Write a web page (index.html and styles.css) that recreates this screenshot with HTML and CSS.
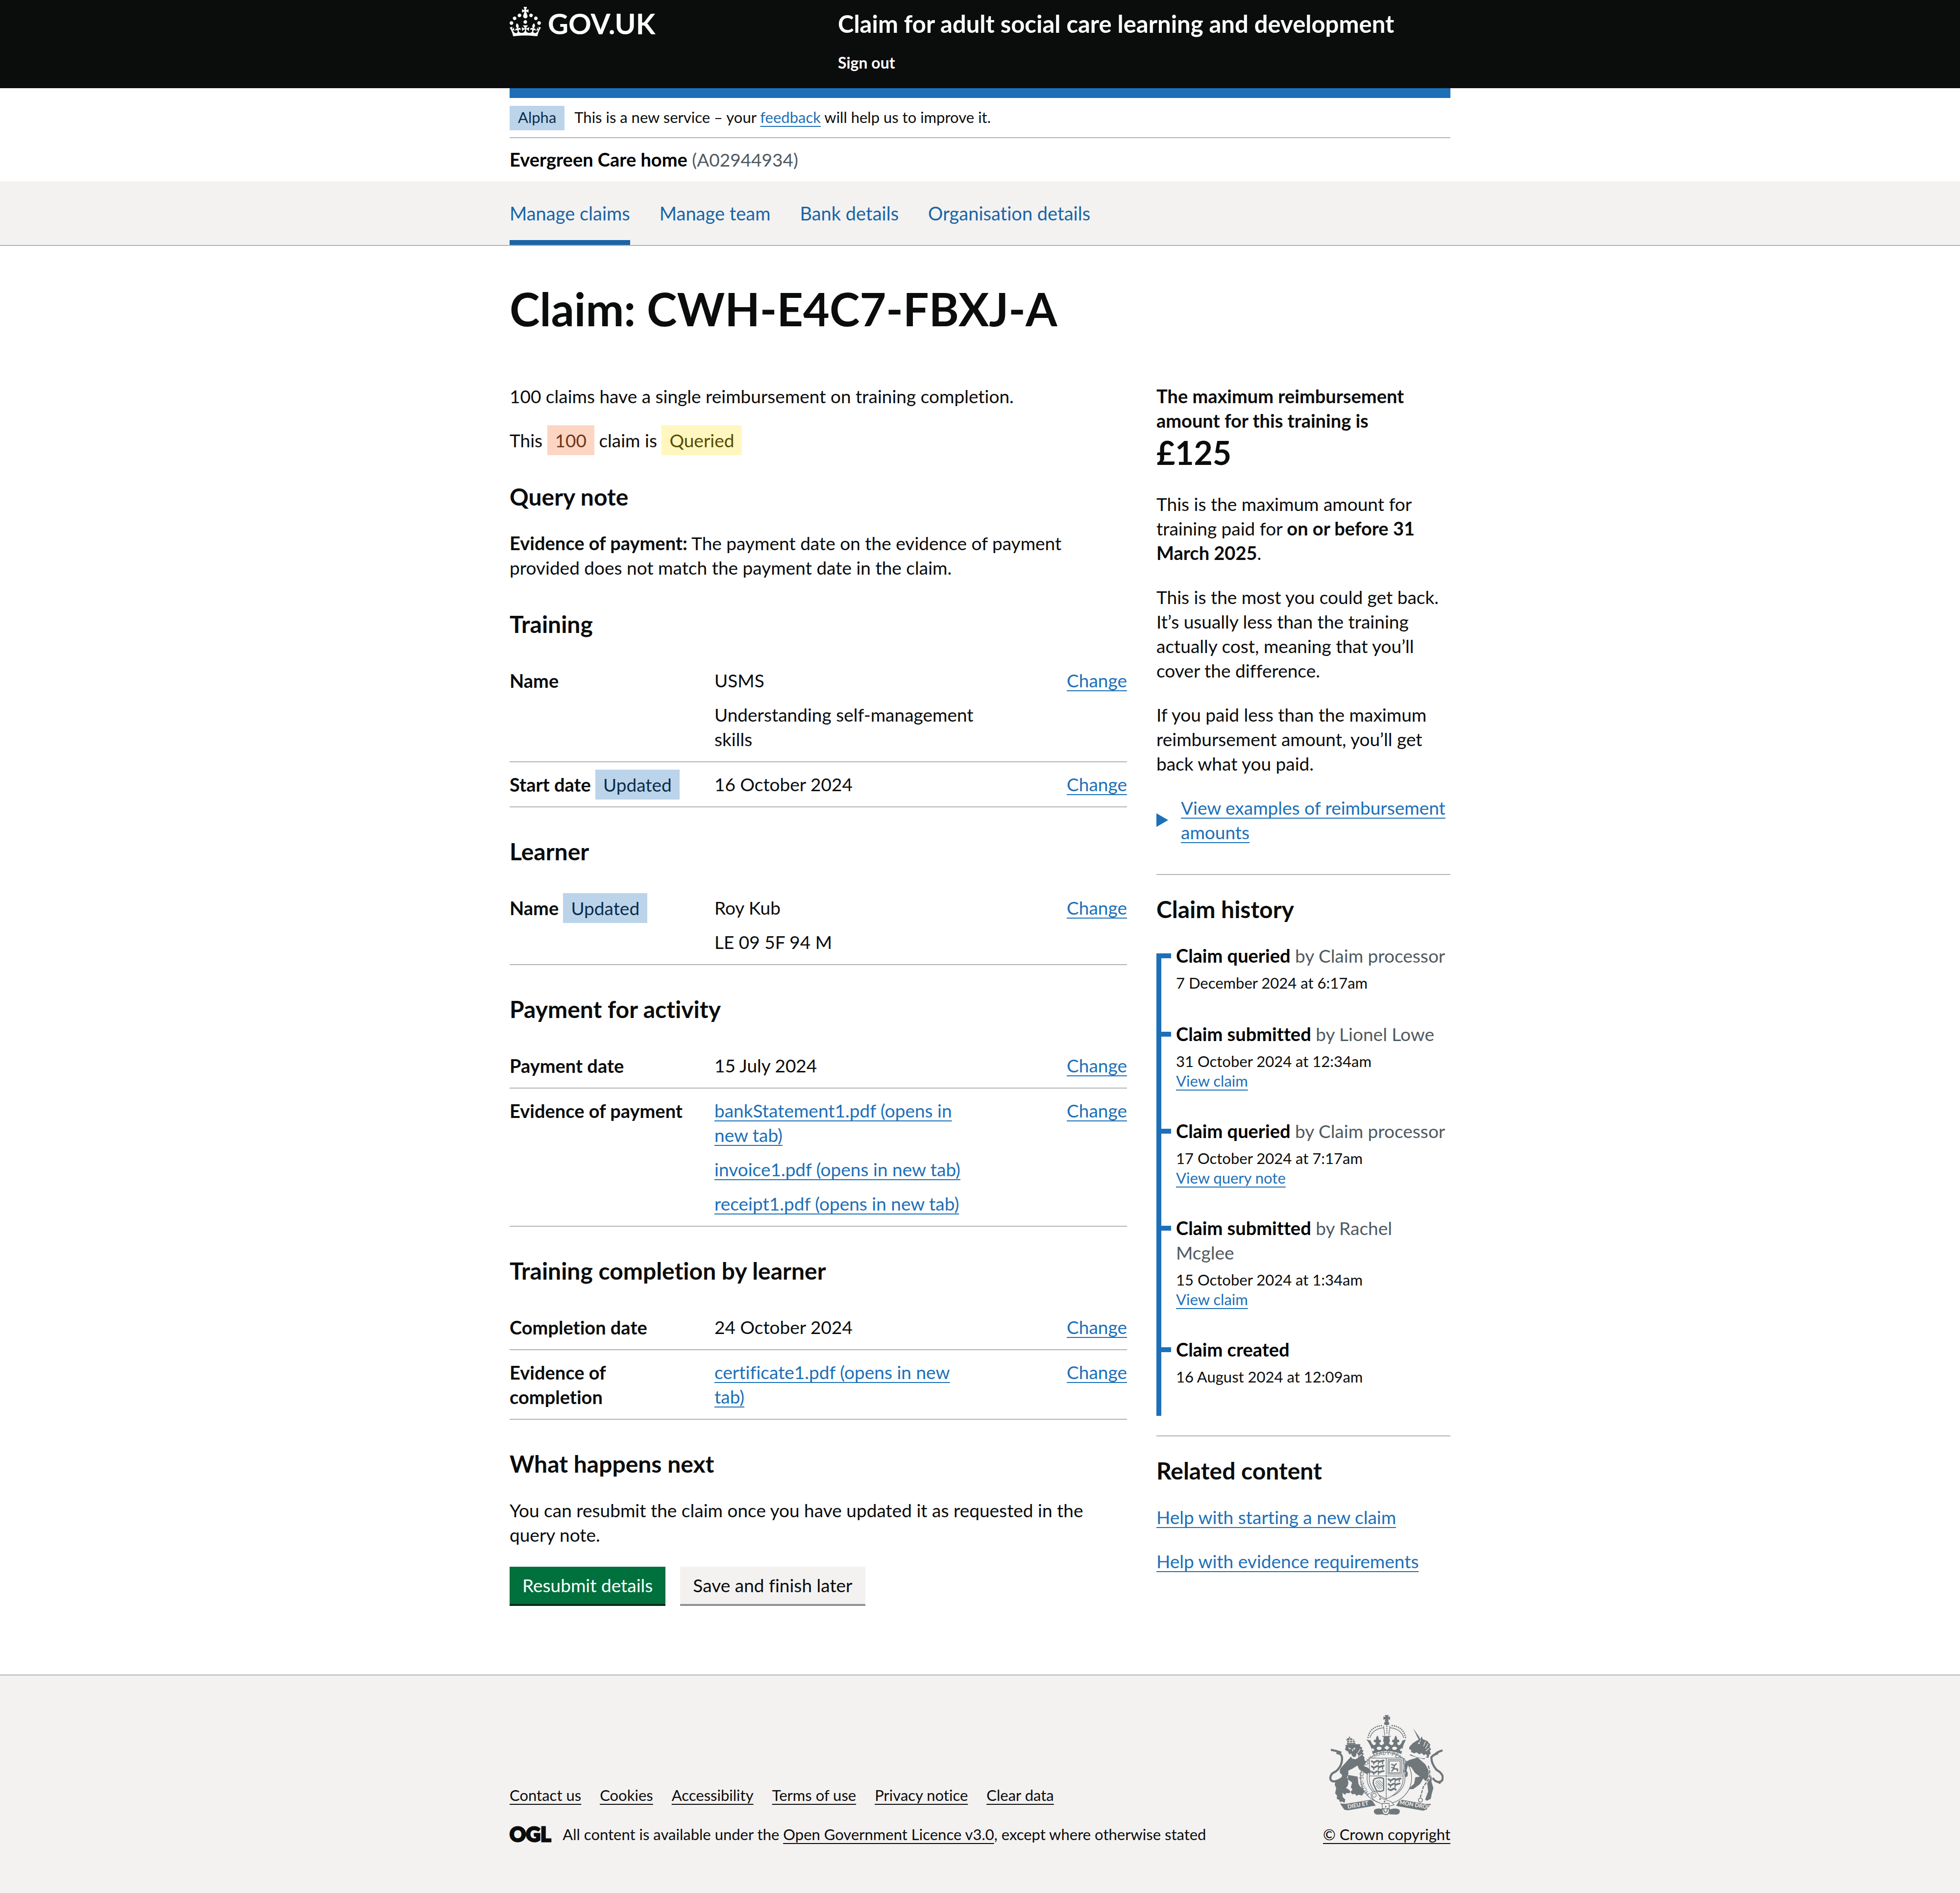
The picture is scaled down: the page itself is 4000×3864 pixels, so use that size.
FILE: index.html
```
<!DOCTYPE html>
<html lang="en">
<head>
<meta charset="utf-8">
<meta name="viewport" content="width=device-width, initial-scale=1">
<title>Claim: CWH-E4C7-FBXJ-A – Claim for adult social care learning and development</title>
<link rel="stylesheet" href="styles.css">
</head>
<body>

<header class="header">
  <div class="container header-grid">
    <a class="header-logo" href="#" aria-label="GOV.UK">
      <svg class="crown" viewBox="0 0 32 30" aria-hidden="true"><path fill="currentColor" fill-rule="evenodd" d="M22.6 10.4c-1 .4-2-.1-2.4-1-.4-.9.1-2 1-2.4.9-.4 2 .1 2.4 1s-.1 2-1 2.4m-5.9 6.7c-.9.4-2-.1-2.4-1-.4-.9.1-2 1-2.4.9-.4 2 .1 2.4 1s-.1 2-1 2.4m10.8-3.7c-1 .4-2-.1-2.4-1-.4-.9.1-2 1-2.4.9-.4 2 .1 2.4 1s0 2-1 2.4m3.3 4.8c-1 .4-2-.1-2.4-1-.4-.9.1-2 1-2.4.9-.4 2 .1 2.4 1s-.1 2-1 2.4M17 4.7l2.3 1.2V2.5l-2.3.7-.2-.2.9-3h-3.4l.9 3-.2.2c-.1.1-2.3-.7-2.3-.7v3.4L15 4.7c.1.1.1.2.2.2l-1.3 4c-.1.2-.1.4-.1.6 0 1.1.8 2 1.9 2.2h.7c1-.2 1.9-1.1 1.9-2.1 0-.2 0-.4-.1-.6l-1.3-4c-.1-.2 0-.2.1-.3m-7.6 5.7c.9.4 2-.1 2.4-1 .4-.9-.1-2-1-2.4-.9-.4-2 .1-2.4 1s0 2 1 2.4m-5 3c.9.4 2-.1 2.4-1 .4-.9-.1-2-1-2.4-.9-.4-2 .1-2.4 1s.1 2 1 2.4m-3.2 4.8c.9.4 2-.1 2.4-1 .4-.9-.1-2-1-2.4-.9-.4-2 .1-2.4 1s0 2 1 2.4m14.8 11c4.4 0 8.6.3 12.3.8 1.1-4.5 2.4-7 3.7-8.8l-2.5-.9c.2 1.3.3 1.9 0 2.7-.4-.4-.8-1.1-1.1-2.3l-1.2 4c.7-.5 1.3-.8 2-.9-1.1 2.5-2.6 3.1-3.5 3-1.1-.2-1.7-1.2-1.5-2.1.3-1.2 1.5-1.5 2.1-.1 1.1-2.3-.8-3-2-2.3 1.9-1.9 2.1-3.5.6-5.6-2.1 1.6-2.1 3.2-1.2 5.5-1.2-1.4-3.2-.6-2.5 1.6.9-1.4 2.1-.5 1.9.8-.2 1.1-1.7 2.1-3.5 1.9-2.7-.2-2.9-2.1-2.9-3.6.7-.1 1.9.5 2.9 1.9l.4-4.3c-1.1 1.1-2.1 1.4-3.2 1.4.4-1.2 2.1-3 2.1-3h-5.4s1.7 1.9 2.1 3c-1.1 0-2.1-.2-3.2-1.4l.4 4.3c1-1.4 2.2-2 2.9-1.9-.1 1.5-.2 3.4-2.9 3.6-1.9.2-3.4-.8-3.5-1.9-.2-1.3 1-2.2 1.9-.8.7-2.3-1.2-3-2.5-1.6.9-2.2.9-3.9-1.2-5.5-1.5 2-1.3 3.7.6 5.6-1.2-.7-3.1 0-2 2.3.6-1.4 1.8-1.1 2.1.1.2.9-.3 1.9-1.5 2.1-.9.2-2.4-.5-3.5-3 .6 0 1.2.3 2 .9l-1.2-4c-.3 1.1-.7 1.9-1.1 2.3-.3-.8-.2-1.4 0-2.7l-2.9.9C1.3 23 2.6 25.5 3.7 30c3.7-.5 7.9-.8 12.3-.8"/></svg>
      <span>GOV.UK</span>
    </a>
    <div class="header-content">
      <a class="service-name" href="#">Claim for adult social care learning and development</a>
      <nav aria-label="Account"><a class="sign-out" href="#">Sign out</a></nav>
    </div>
  </div>
</header>

<div class="container">
  <div class="blue-bar"></div>
  <div class="phase-banner">
    <strong class="tag tag-phase">Alpha</strong>
    <span>This is a new service – your <a class="link" href="#">feedback</a> will help us to improve it.</span>
  </div>
  <p class="organisation"><strong>Evergreen Care home</strong> <span class="muted">(A02944934)</span></p>
</div>

<nav class="primary-nav" aria-label="Primary">
  <ul class="container nav-list">
    <li><a class="nav-link nav-link-current" href="#" aria-current="page">Manage claims</a></li>
    <li><a class="nav-link" href="#">Manage team</a></li>
    <li><a class="nav-link" href="#">Bank details</a></li>
    <li><a class="nav-link" href="#">Organisation details</a></li>
  </ul>
</nav>

<main class="container main">
  <h1 class="page-title">Claim: CWH-E4C7-FBXJ-A</h1>
  <div class="columns">
    <div class="content">
      <p>100 claims have a single reimbursement on training completion.</p>
      <p>This <strong class="tag tag-orange">100</strong> claim is <strong class="tag tag-yellow">Queried</strong></p>

      <h2 class="heading">Query note</h2>
      <p><strong>Evidence of payment:</strong> The payment date on the evidence of payment provided does not match the payment date in the claim.</p>

      <h2 class="heading">Training</h2>
      <dl class="summary">
        <div class="row">
          <dt>Name</dt>
          <dd class="value"><p>USMS</p><p>Understanding self-management skills</p></dd>
          <dd class="action"><a class="link" href="#">Change</a></dd>
        </div>
        <div class="row">
          <dt>Start date <strong class="tag">Updated</strong></dt>
          <dd class="value"><p>16 October 2024</p></dd>
          <dd class="action"><a class="link" href="#">Change</a></dd>
        </div>
      </dl>

      <h2 class="heading">Learner</h2>
      <dl class="summary">
        <div class="row">
          <dt>Name <strong class="tag">Updated</strong></dt>
          <dd class="value"><p>Roy Kub</p><p>LE 09 5F 94 M</p></dd>
          <dd class="action"><a class="link" href="#">Change</a></dd>
        </div>
      </dl>

      <h2 class="heading">Payment for activity</h2>
      <dl class="summary">
        <div class="row">
          <dt>Payment date</dt>
          <dd class="value"><p>15 July 2024</p></dd>
          <dd class="action"><a class="link" href="#">Change</a></dd>
        </div>
        <div class="row">
          <dt>Evidence of payment</dt>
          <dd class="value">
            <p><a class="link" href="#">bankStatement1.pdf (opens in new tab)</a></p>
            <p><a class="link" href="#">invoice1.pdf (opens in new tab)</a></p>
            <p><a class="link" href="#">receipt1.pdf (opens in new tab)</a></p>
          </dd>
          <dd class="action"><a class="link" href="#">Change</a></dd>
        </div>
      </dl>

      <h2 class="heading">Training completion by learner</h2>
      <dl class="summary">
        <div class="row">
          <dt>Completion date</dt>
          <dd class="value"><p>24 October 2024</p></dd>
          <dd class="action"><a class="link" href="#">Change</a></dd>
        </div>
        <div class="row">
          <dt>Evidence of completion</dt>
          <dd class="value"><p><a class="link" href="#">certificate1.pdf (opens in new tab)</a></p></dd>
          <dd class="action"><a class="link" href="#">Change</a></dd>
        </div>
      </dl>

      <h2 class="heading">What happens next</h2>
      <p>You can resubmit the claim once you have updated it as requested in the query note.</p>
      <div class="button-group">
        <button class="button" type="button">Resubmit details</button>
        <button class="button button-secondary" type="button">Save and finish later</button>
      </div>
    </div>

    <aside class="sidebar">
      <p class="amount"><strong>The maximum reimbursement amount for this training is</strong> <strong class="amount-figure">£125</strong></p>
      <p>This is the maximum amount for training paid for <strong>on or before 31 March 2025</strong>.</p>
      <p>This is the most you could get back. It’s usually less than the training actually cost, meaning that you’ll cover the difference.</p>
      <p>If you paid less than the maximum reimbursement amount, you’ll get back what you paid.</p>
      <details class="details">
        <summary><span class="link">View examples of reimbursement amounts</span></summary>
      </details>

      <section class="panel">
        <h2 class="heading">Claim history</h2>
        <ol class="timeline">
          <li>
            <h3><strong>Claim queried</strong> <span class="muted">by Claim processor</span></h3>
            <time>7 December 2024 at 6:17am</time>
          </li>
          <li>
            <h3><strong>Claim submitted</strong> <span class="muted">by Lionel Lowe</span></h3>
            <time>31 October 2024 at 12:34am</time>
            <div class="timeline-link"><a class="link" href="#">View claim</a></div>
          </li>
          <li>
            <h3><strong>Claim queried</strong> <span class="muted">by Claim processor</span></h3>
            <time>17 October 2024 at 7:17am</time>
            <div class="timeline-link"><a class="link" href="#">View query note</a></div>
          </li>
          <li>
            <h3><strong>Claim submitted</strong> <span class="muted">by Rachel Mcglee</span></h3>
            <time>15 October 2024 at 1:34am</time>
            <div class="timeline-link"><a class="link" href="#">View claim</a></div>
          </li>
          <li>
            <h3><strong>Claim created</strong></h3>
            <time>16 August 2024 at 12:09am</time>
          </li>
        </ol>
      </section>

      <section class="panel">
        <h2 class="heading">Related content</h2>
        <p><a class="link" href="#">Help with starting a new claim</a></p>
        <p><a class="link" href="#">Help with evidence requirements</a></p>
      </section>
    </aside>
  </div>
</main>

<footer class="footer">
  <div class="container footer-inner">
    <div class="footer-meta">
      <ul class="footer-links">
        <li><a class="link" href="#">Contact us</a></li>
        <li><a class="link" href="#">Cookies</a></li>
        <li><a class="link" href="#">Accessibility</a></li>
        <li><a class="link" href="#">Terms of use</a></li>
        <li><a class="link" href="#">Privacy notice</a></li>
        <li><a class="link" href="#">Clear data</a></li>
      </ul>
      <div class="licence">
        <span class="ogl">OGL</span>
        <span>All content is available under the <a class="link" href="#">Open Government Licence v3.0</a>, except where otherwise stated</span>
      </div>
    </div>
    <div class="copyright">
      <svg class="crest" viewBox="100 58 700 616" aria-hidden="true">
        <defs>
          <path id="garter" d="M352 540A138 138 0 1 1 545 540"/>
        </defs>
        <g fill="currentColor">
          <!-- crown -->
          <path d="M441 60h24l-4 13 12-5v22l-12-5 4 14h-24l4-14-12 5V68l12 5z"/>
          <path d="M438 118q-4-18 15-20 19 2 15 20l-15 6z"/>
          <path d="M333 210l22 6q8 26 22 28 12-2 8-18l-12-2 4-14 10 2q-2-14 9-27 11 13 9 27l10-2 4 14-10 4q0 16 12 16 14-2 16-16l-6-8 4-24-12-8h58l-12 8 4 24-6 8q2 14 16 16 12 0 12-16l-10-4 4-14 10 2q-2-14 9-27 11 13 9 27l10-2 4 14-12 2q-4 16 8 18 14-2 22-28l22-6q-22 38-28 88-92-36-176 0-6-50-38-88z"/>
        </g>
        <g fill="none" stroke="currentColor">
          <path stroke-width="9" stroke-linecap="round" stroke-dasharray="0 13" d="M339 196q14-66 86-72M568 196q-14-66-84-72"/>
          <path stroke-width="4" d="M350 200q18-56 84-62M558 200q-18-56-84-62M434 126l7 58M473 126l-7 58"/>
          <path stroke-width="8" stroke-linecap="round" stroke-dasharray="0 13" d="M454 130v52"/>
        </g>
        <g class="crest-paper">
          <ellipse cx="407" cy="263" rx="15" ry="10"/><ellipse cx="501" cy="263" rx="15" ry="10"/>
          <path d="M454 246l16 14-16 13-16-13zM366 262l12 10-8 10-12-10zM544 262l-12 10 8 10 12-10z"/>
        </g>
        <!-- lion -->
        <g fill="currentColor">
          <path d="M209 238q6-10 2-18-10-10 4-18l8-2v-8h6v8l10 2q16 6 20 18 2 8 4 18z"/>
          <path d="M202 246l14-8h54l22 0-2 14 14 6-4 12 12 8-8 10 10 10-8 8 10 10 2 20 20 20 12 30 16 16-6 16-14-4-10 12-12-8-14-16-24-8-12-26-30 20-26 12q4 24-8 40 20 40-6 66l20 10 8 14-8 8-18-2-6 10-10-4-18-18-20-2-8-18-8-16 4-30 22-6q20-6 18-28-22-10-8-40l70-78-22-8-8-16-14-12 6-16-8-14z"/>
          <path d="M218 426l58 10 4 40q6 24 34 36l2 20-14 20-20-6-14 8-8-12-18 2-10-14 12-16-10-12 8-30-28-20z"/>
          <path d="M146 500l36 20 2 40 16 16-4 20-16-8-12 4-6-14-14-6 2-20-12-14z"/>
        </g>
        <path fill="none" stroke="currentColor" stroke-width="13" d="M188 440q-30 24-58 26-26-4-20-30 4-20 30-30 44-34 40-90-6-24-34-24M176 290q-30-12-64-18M150 460q10 18-2 18"/>
        <g class="crest-paper">
          <path d="M216 258l20 6-8 6zM262 258l-16 8 12 6zM240 270l10 0-4 14zM228 300l8-6 4 14 12 10 14-6 2-20 12 12-2 18-16 8-20-4z"/>
          <path d="M228 416q10-8 26-4l20 12-26-4z"/>
        </g>
        <g fill="none" stroke="#f3f2f1" stroke-width="4"><path d="M210 216h52M216 228h46M228 202v30M244 204v28M214 280l10 24M292 268l-16 24M302 300l-20 14"/></g>
        <!-- unicorn -->
        <g fill="currentColor">
          <path d="M614 140l36 52 8 18-8 4z"/>
          <path d="M592 254l20-22 28-18 18-6 8-18 8 18 26 10 20 24-6 10 10 18-8 8 6 18-10 8-4 18-14-2-12 10-50-12-38-12 8-14 0-20-12-2z"/>
          <path d="M562 352l30-18 50-14 46 40 24 44q22 38 14 62l12 40-10 36-6 30-24 12-10-8 18-50-6-52-24-26-20 34-40 30-34 2 38-34 8-40 28-4-30-22-24-36-30-10-8 38 6 16-10 8q-18-30-10-52z"/>
        </g>
        <path fill="none" stroke="currentColor" stroke-width="13" d="M734 444q14 26 42 26 24-10 18-38-10-24-36-36-34-40-32-78 14-18 40-24M744 304q20-20 50-28M772 464q6 6 2 16"/>
        <g class="crest-paper"><path d="M604 286l16 8 16-6 16 12 14-8 14 14 12-8 8 12-10 14-24 0-40-10-32-16z"/><circle cx="650" cy="232" r="5"/></g>
        <g fill="none" stroke="#f3f2f1" stroke-width="4"><path d="M690 222l-12 28M706 236l-16 28M712 262l-20 18M660 214l-6 10"/></g>
        <g fill="none" stroke="#f3f2f1" stroke-width="14" stroke-dasharray="20 4"><path d="M706 370q18 40 4 80l-34 50-18 64"/></g>
        <g fill="none" stroke="currentColor" stroke-width="7" stroke-dasharray="20 7"><path d="M706 370q18 40 4 80l-34 50-18 64"/></g>
        <circle cx="659" cy="580" r="12" fill="none" stroke="currentColor" stroke-width="5"/>
        <!-- garter and shield -->
        <circle class="crest-paper" cx="449" cy="444" r="156" stroke="currentColor" stroke-width="4"/>
        <circle cx="449" cy="444" r="116" fill="none" stroke="currentColor" stroke-width="4"/>
        <text class="crest-garter"><textPath href="#garter">HONI·SOIT·QUI·MAL·Y·PENSE</textPath></text>
        <path class="crest-paper" stroke="currentColor" stroke-width="4" d="M347 323h206v130q-4 76-103 120-99-44-103-120z"/>
        <path fill="none" stroke="currentColor" stroke-width="4" d="M450 323v250M347 432h206M461 333h82v88h-82zM469 341h66v72h-66z"/>
        <g fill="none" stroke="currentColor" stroke-width="11" stroke-linecap="round" stroke-linejoin="round">
          <path d="M362 342q12 12 24 2t22 2q14-6 26-8M362 374q12 12 24 2t22 2q14-6 26-8M362 406q12 12 24 2t22 2q14-6 26-8"/>
          <path d="M464 452q12 12 24 2t20 2q14-6 30-8M464 482q12 12 24 2t20 2q14-6 24-8M464 512q12 12 24 2t20 2"/>
          <path stroke-width="7" d="M374 352v8M402 352v8M428 346v12M374 384v8M402 384v8M428 378v12M374 416v6M402 416v6M476 462v8M504 462v8M530 454v10M476 492v8M504 492v8"/>
          <path stroke-width="8" d="M484 362l16 6 12-10M500 368l-4 20 24 2M496 388l-12 14M516 390l4 12M484 380l10 4"/>
          <path stroke-width="8" d="M374 456q-8 20 4 40l14 28q26 6 42-4V448q-20-12-56 2"/>
        </g>
        <path fill="none" stroke="currentColor" stroke-width="3" d="M386 462l40 40M384 474l36 36M394 458l34 34M386 490l24 24M406 456l22 22"/>
        <!-- supporters' paws over the shield -->
        <g fill="currentColor"><path d="M296 366l40 14 20 18-2 18-14-2-6 8-22-12-24-22zM560 356l26-10 14 8-18 14-8 30 8 16-2 20-12 6-4-14 4-12-8-10z"/></g>
        <!-- buckle and scroll -->
        <g fill="currentColor">
          <path d="M168 600l34 2 150-24 14 6 20 30-20 2-150 26-22-4z"/>
          <path d="M724 602l-34 2-144-26-16 6-20 30 18 4 148 26 22-8z"/>
          <path d="M376 640q20-16 58-4l4 30-44 2q-24-4-18-28zM532 640q-20-16-60-4l-4 30 46 2q24-4 18-28z"/>
        </g>
        <g class="crest-paper" stroke="currentColor" stroke-width="4">
          <path d="M358 536q20-14 38-2l22 34 60 20 20 20-26 8-46-12-44-20q-30-20-24-48z"/>
          <path d="M426 600h42v32h-42z"/>
          <circle cx="377" cy="550" r="12"/>
          <path stroke-width="6" d="M426 632q-4 36 22 36 24 0 20-36l-12 0q2 22-10 22t-10-22z"/>
        </g>
        <g fill="currentColor"><circle cx="412" cy="574" r="5"/><circle cx="440" cy="588" r="5"/><circle cx="447" cy="620" r="5"/></g>
        <text class="crest-motto" transform="translate(216 632) rotate(-10)">DIEU ET</text>
        <text class="crest-motto" transform="translate(530 604) rotate(10)">MON DROIT</text>
      </svg>
      <a class="link" href="#">© Crown copyright</a>
    </div>
  </div>
</footer>

</body>
</html>
```
FILE: styles.css
```
:root {
  --ink: #0b0c0c;
  --muted: #505a5f;
  --link: #1d70b8;
  --nav-link: #1a65a6;
  --rule: #b1b4b6;
  --paper: #f3f2f1;
}

* { box-sizing: border-box; }

body {
  margin: 0;
  background: #fff;
  color: var(--ink);
  font: 400 37px/50px Lato, "Liberation Sans", sans-serif;
  font-variant-ligatures: none;
}

h1, h2, h3, p, ul, ol, dl, dd { margin: 0; padding: 0; }
ul, ol { list-style: none; }
strong { font-size: 38px; font-weight: 700; line-height: 40px; }
a { color: inherit; text-decoration: none; }

.container {
  max-width: 1920px;
  margin: 0 auto;
}

.link {
  color: var(--link);
  text-decoration: underline;
  text-decoration-thickness: 2px;
  text-decoration-skip-ink: none;
  text-underline-offset: 6px;
}

.muted { color: var(--muted); font-weight: 400; }

/* Header */
.header { background: var(--ink); color: #fff; }

.header-grid {
  display: grid;
  grid-template-columns: 1fr 2fr;
  gap: 45px;
  padding: 14px 0 32px;
}

.header-logo {
  display: flex;
  align-items: flex-start;
  gap: 14px;
  font-size: 58px;
  font-weight: 700;
  line-height: 68px;
}

.crown { width: 64px; height: 60px; }

.header-content { padding-top: 4px; }

.service-name {
  display: block;
  margin-bottom: 30px;
  font-size: 49px;
  font-weight: 700;
  line-height: 60px;
}

.sign-out {
  display: block;
  font-size: 32px;
  font-weight: 700;
  line-height: 40px;
}

.blue-bar { height: 20px; background: var(--link); }

.phase-banner {
  display: flex;
  gap: 20px;
  padding: 16px 0 18px;
  border-bottom: 2px solid var(--rule);
  font-size: 31px;
  line-height: 46px;
}

.organisation { padding: 19px 0; color: #000; }

/* Tags */
.tag {
  padding: 8px 16px;
  background: #bbd4ea;
  color: #0c2d4a;
  font-size: 37px;
  font-weight: 400;
}

.tag-orange { background: #fcd6c3; color: #6e3619; }
.tag-yellow { background: #fff7bf; color: #594d00; }

.tag-phase {
  padding: 0 17px;
  margin-bottom: -4px;
  font-size: 31px;
  line-height: 46px;
}

/* Primary navigation */
.primary-nav {
  background: var(--paper);
  border-bottom: 2px solid var(--rule);
}

.nav-list { display: flex; gap: 60px; }

.nav-link {
  display: block;
  padding: 40px 0 30px;
  border-bottom: 10px solid transparent;
  color: var(--nav-link);
  font-size: 38px;
}

.nav-link-current { border-color: var(--nav-link); }

/* Page */
.main { padding: 78px 0 140px; }

.page-title {
  margin-bottom: 104px;
  font-size: 93px;
  font-weight: 700;
  line-height: 100px;
}

.columns {
  display: grid;
  grid-template-columns: 21fr 10fr;
  gap: 60px;
}

.content > p, .sidebar p { margin-bottom: 40px; }

.heading {
  margin-bottom: 40px;
  font-size: 48px;
  font-weight: 700;
  line-height: 60px;
}

.content > p + .heading { padding-top: 20px; }

/* Summary lists */
.summary { margin-bottom: 60px; }

.row {
  display: grid;
  grid-template-columns: 30% 43% 1fr;
  column-gap: 40px;
  padding: 20px 0;
  border-bottom: 2px solid var(--rule);
}

.row dt { font-size: 38px; font-weight: 700; }
.value { display: grid; gap: 20px; }
.action { text-align: right; }

/* Buttons */
.button-group { display: flex; gap: 30px; }

.button {
  margin: 0 0 4px;
  padding: 13px 26px;
  border: 0;
  border-radius: 0;
  background: #00703c;
  box-shadow: 0 4px 0 #002d18;
  color: #fff;
  font: inherit;
}

.button-secondary {
  background: var(--paper);
  box-shadow: 0 4px 0 #929191;
  color: var(--ink);
}

/* Sidebar */
.amount-figure {
  display: block;
  font-size: 66px;
  line-height: 80px;
}

.details { margin-bottom: 60px; }

.details summary {
  display: grid;
  grid-template-columns: 24px 1fr;
  column-gap: 26px;
  align-items: center;
  list-style: none;
}

.details summary::before {
  content: "";
  height: 28px;
  background: var(--link);
  clip-path: polygon(0 0, 100% 50%, 0 100%);
}

.panel {
  padding-top: 40px;
  border-top: 2px solid var(--rule);
}

/* Timeline */
.timeline {
  position: relative;
  margin-bottom: 40px;
}

.timeline::before {
  content: "";
  position: absolute;
  inset: 20px auto 0 0;
  width: 10px;
  background: var(--link);
}

.timeline li {
  position: relative;
  padding: 0 0 60px 40px;
}

.timeline li::before {
  content: "";
  position: absolute;
  top: 20px;
  left: 0;
  width: 30px;
  height: 10px;
  background: var(--link);
}

.timeline h3 {
  margin-bottom: 10px;
  color: #000;
  font-size: 37px;
  font-weight: 400;
}

.timeline time { display: block; font-size: 31px; line-height: 40px; }
.timeline-link { margin-bottom: -2px; font-size: 31px; line-height: 40px; }

/* Footer */
.footer {
  padding: 80px 0 100px;
  border-top: 2px solid var(--rule);
  background: var(--paper);
  font-size: 31px;
  line-height: 40px;
}

.footer .link { color: var(--ink); }

.footer-inner {
  display: flex;
  justify-content: space-between;
  align-items: flex-end;
}

.footer-links {
  display: flex;
  flex-wrap: wrap;
  gap: 38px;
  margin-bottom: 40px;
}

.licence { display: flex; gap: 24px; }

.ogl {
  font-size: 41px;
  font-weight: 900;
  -webkit-text-stroke: 3px currentColor;
}

.copyright {
  display: flex;
  flex-direction: column;
  align-items: flex-end;
}

.crest {
  width: 234px;
  height: 206px;
  margin: 0 14px 18px 0;
  color: #6f777b;
}

.crest-paper { fill: var(--paper); }
.crest-garter { fill: currentColor; font-size: 34px; font-weight: 400; }
.crest-motto { fill: var(--paper); font-size: 34px; font-weight: 700; }
```
